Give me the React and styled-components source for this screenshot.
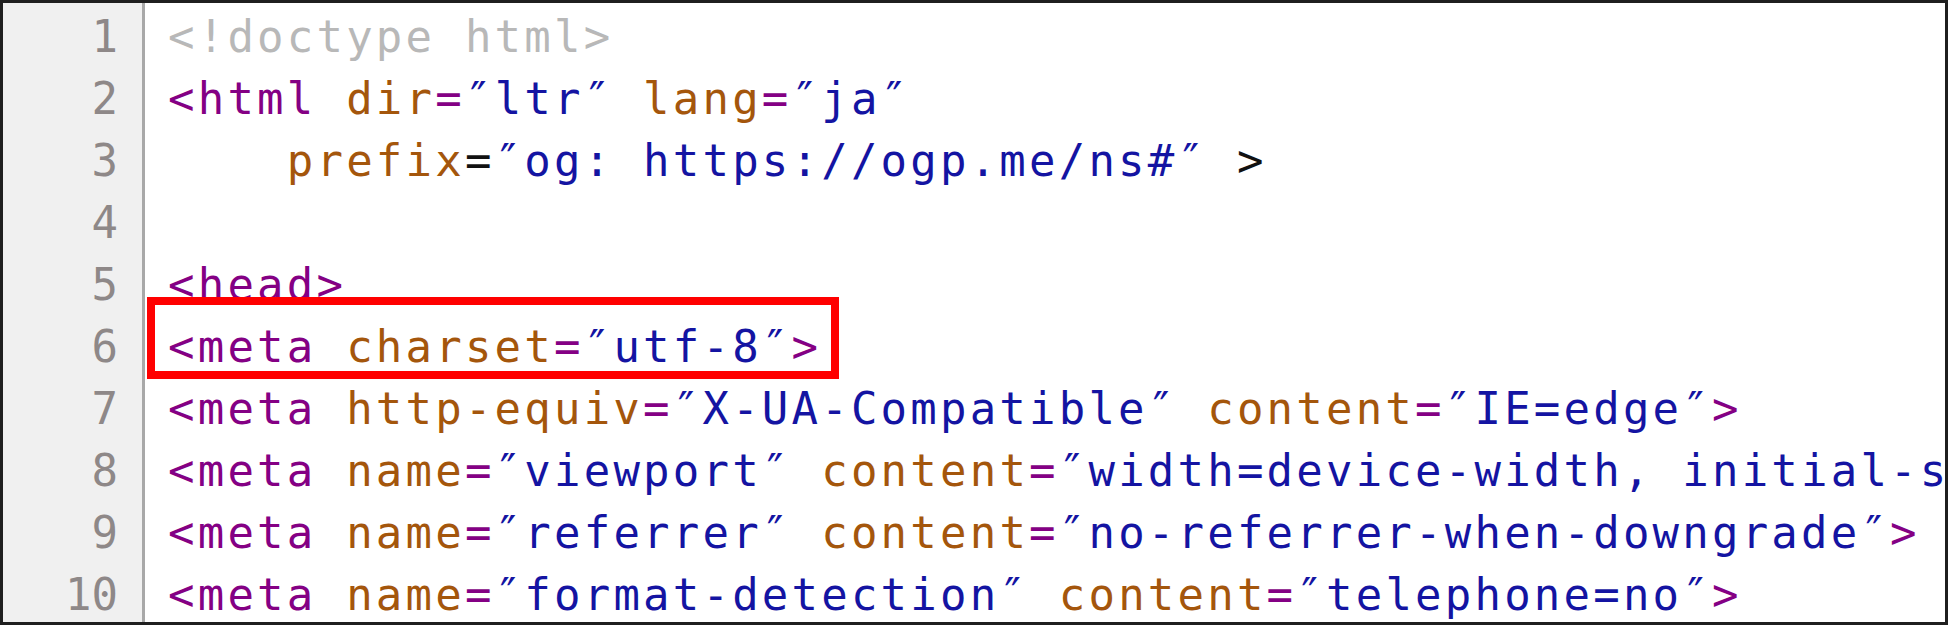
import React from 'react';
import styled, { createGlobalStyle } from 'styled-components';

const Q = '\u2033';

const lines = [
  [['d', '<!doctype html>']],
  [['t', '<html'], ['s', ' '], ['a', 'dir'], ['e', '='], ['v', `${Q}ltr${Q}`], ['s', ' '], ['a', 'lang'], ['e', '='], ['v', `${Q}ja${Q}`]],
  [['s', '    '], ['a', 'prefix'], ['k', '='], ['v', `${Q}og: https://ogp.me/ns#${Q}`], ['k', ' >']],
  [],
  [['t', '<head>']],
  [['t', '<meta'], ['s', ' '], ['a', 'charset'], ['e', '='], ['v', `${Q}utf-8${Q}`], ['t', '>']],
  [['t', '<meta'], ['s', ' '], ['a', 'http-equiv'], ['e', '='], ['v', `${Q}X-UA-Compatible${Q}`], ['s', ' '], ['a', 'content'], ['e', '='], ['v', `${Q}IE=edge${Q}`], ['t', '>']],
  [['t', '<meta'], ['s', ' '], ['a', 'name'], ['e', '='], ['v', `${Q}viewport${Q}`], ['s', ' '], ['a', 'content'], ['e', '='], ['v', `${Q}width=device-width, initial-scale=1${Q}`], ['t', '>']],
  [['t', '<meta'], ['s', ' '], ['a', 'name'], ['e', '='], ['v', `${Q}referrer${Q}`], ['s', ' '], ['a', 'content'], ['e', '='], ['v', `${Q}no-referrer-when-downgrade${Q}`], ['t', '>']],
  [['t', '<meta'], ['s', ' '], ['a', 'name'], ['e', '='], ['v', `${Q}format-detection${Q}`], ['s', ' '], ['a', 'content'], ['e', '='], ['v', `${Q}telephone=no${Q}`], ['t', '>']],
];

const colors = {
  d: '#b8b8b8',
  t: '#840084',
  a: '#a4560c',
  e: '#840084',
  v: '#1414a2',
  k: '#111111',
  s: 'inherit',
};

function App() {
  return (
    <>
      <GlobalStyle />
      <Frame>
        <Gutter>
          {lines.map((_, i) => (
            <Num key={i}>{i + 1}</Num>
          ))}
        </Gutter>
        <Code>
          {lines.map((tokens, i) => (
            <Line key={i} $marked={i === 5}>
              {tokens.map(([type, text], j) => (
                <Token key={j} $type={type}>{text}</Token>
              ))}
            </Line>
          ))}
        </Code>
      </Frame>
    </>
  );
}

const GlobalStyle = createGlobalStyle`
  html, body {
    margin: 0;
    padding: 0;
    background: #ffffff;
  }
  *, *::before, *::after {
    box-sizing: border-box;
  }
`;

const Frame = styled.div`
  display: flex;
  width: 1948px;
  height: 625px;
  border: 3px solid #1f1f1f;
  background: #ffffff;
  overflow: hidden;
  font-family: "DejaVu Sans Mono", "Liberation Mono", monospace;
  font-size: 44px;
  line-height: 62px;
`;

const Gutter = styled.div`
  flex: 0 0 142px;
  background: #f0f0f0;
  border-right: 3px solid #a8a8a8;
  padding: 3px 24px 0 0;
  text-align: right;
`;

const Num = styled.div`
  height: 62px;
  color: #8e8888;
`;

const Code = styled.div`
  flex: 1;
  padding: 3px 0 0 23px;
  min-width: 0;
`;

const Line = styled.div`
  position: relative;
  height: 62px;
  white-space: pre;
  letter-spacing: 3.2px;

  ${({ $marked }) =>
    $marked &&
    `
    &::before {
      content: '';
      position: absolute;
      left: -21px;
      top: -19px;
      width: 692px;
      height: 82px;
      border: 8px solid #ff0000;
      pointer-events: none;
    }
  `}
`;

const Token = styled.span`
  color: ${({ $type }) => colors[$type]};
`;

export default App;
